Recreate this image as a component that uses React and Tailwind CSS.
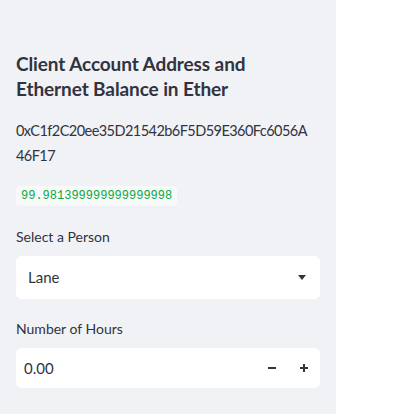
import React from "react";

const App = () => {
  return (
    <div className="flex h-[414px] w-[406px] bg-white font-['Lato',sans-serif] text-[#31333f]">
      {/* Sidebar */}
      <div className="w-[336px] shrink-0 bg-[#f0f2f6] px-4 pt-[51px]">
        <h2 className="text-[19px] font-bold leading-[25px] tracking-[-0.1px]">
          Client Account Address and
          <br />
          Ethernet Balance in Ether
        </h2>

        <div className="mt-[17px] text-[14.5px] leading-[25px] tracking-[-0.55px]">
          <div className="whitespace-nowrap">0xC1f2C20ee35D21542b6F5D59E360Fc6056A</div>
          <div>46F17</div>
        </div>

        <div className="mt-[18px] inline-block rounded bg-[#f8f9fb] px-[5px] py-[2px] font-['Liberation_Mono',monospace] text-[12px] leading-[16px] text-[#09ab3b]">
          99.981399999999999998
        </div>

        <div className="mt-[21px] text-[14px] leading-[20px]">Select a Person</div>
        <div className="mt-[9px] flex h-[43px] items-center justify-between rounded-md bg-white pl-3 pr-[14px]">
          <span className="text-[15px]">Lane</span>
          <svg width="8" height="5" viewBox="0 0 8 5">
            <path d="M0 0h8L4 5z" fill="#31333f" />
          </svg>
        </div>

        <div className="mt-[20px] text-[14px] leading-[20px]">Number of Hours</div>
        <div className="mt-[9px] flex h-[40px] items-center rounded-md bg-white pl-2">
          <span className="flex-1 text-[15px]">0.00</span>
          <div className="flex h-full items-center">
            <div className="flex h-full w-8 items-center justify-center">
              <svg width="8" height="8" viewBox="0 0 8 8">
                <rect x="0" y="3" width="8" height="2" fill="#31333f" />
              </svg>
            </div>
            <div className="flex h-full w-8 items-center justify-center">
              <svg width="8" height="8" viewBox="0 0 8 8">
                <rect x="0" y="3" width="8" height="2" fill="#31333f" />
                <rect x="3" y="0" width="2" height="8" fill="#31333f" />
              </svg>
            </div>
          </div>
        </div>
      </div>
      <div className="flex-1 bg-white" />
    </div>
  );
};

export default App;
